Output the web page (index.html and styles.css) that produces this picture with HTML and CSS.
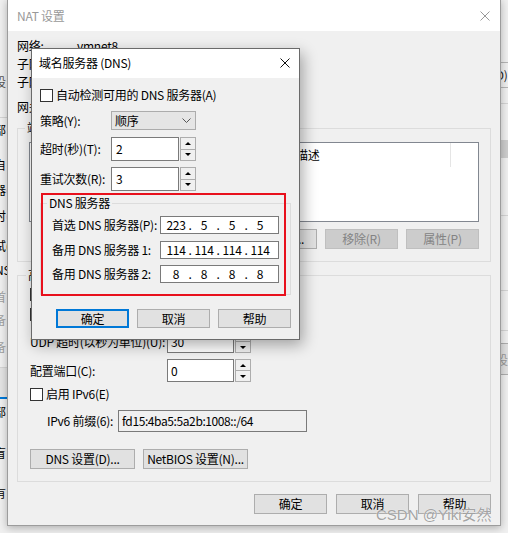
FILE: index.html
```html
<!DOCTYPE html>
<html lang="zh-CN">
<head>
<meta charset="utf-8">
<title>NAT 设置</title>
<link rel="stylesheet" href="styles.css">
</head>
<body>
<div class="desk">

  <div class="win back">
    <div class="bk-l">
      <div class="bk-t b1 gray">设</div>
      <div class="bk-line b2"></div>
      <div class="bk-t b3">部</div>
      <div class="bk-t b4">自</div>
      <div class="bk-t b5">器<span class="blue">(</span></div>
      <div class="bk-t b6">时<span class="blue">(</span></div>
      <div class="bk-t b7">试(</div>
      <div class="bk-t b8 sm">DNS</div>
      <div class="bk-t b9 lgray">首</div>
      <div class="bk-t b10 lgray">备</div>
      <div class="bk-t b11 lgray">备</div>
      <div class="bk-line b12"></div>
      <div class="bk-tab"></div>
      <div class="bk-t b14">部</div>
      <div class="bk-t b15">盲</div>
      <div class="bk-t b16">有</div>
    </div>
    <div class="bk-r">
      <div class="br-btn">(D)</div>
      <div class="bk-line r2"></div>
      <div class="br-band"></div>
      <div class="bk-line r4"></div>
      <div class="bk-line r5"></div>
      <div class="bk-line r6"></div>
      <div class="br-btn2">设</div>
    </div>
  </div>

  <div class="win nat">
    <div class="titlebar nat-tb">
      <span class="ttl">NAT 设置</span>
      <svg class="xicon" width="10" height="10" viewBox="0 0 10 10"><path d="M0.5 0.5L9.5 9.5M9.5 0.5L0.5 9.5"/></svg>
    </div>
    <div class="nat-body">
      <div class="irow"><span class="ilbl">网络:</span><span>vmnet8</span></div>
      <div class="irow"><span class="ilbl">子网 IP:</span></div>
      <div class="irow"><span class="ilbl">子网掩码:</span></div>
      <div class="irow gw"><span class="ilbl">网关 IP(G):</span></div>

      <fieldset class="grp pf">
        <legend>端口转发(F)</legend>
        <div class="lv">
          <div class="lv-head">
            <span class="c1"></span><span class="c2"></span><span class="c3"></span><span class="c4">描述</span>
          </div>
        </div>
        <div class="brow">
          <button class="btn b73">添加(A)...</button>
          <button class="btn b73 dis">移除(R)</button>
          <button class="btn b73 dis">属性(P)</button>
        </div>
      </fieldset>

      <fieldset class="grp adv">
        <legend>高级</legend>
        <div class="chk a1"><span class="box"></span></div>
        <div class="chk a2"><span class="box"></span></div>
        <div class="frow a3">
          <span class="flbl">UDP 超时(以秒为单位)(U):</span>
          <div class="spin nspin"><span class="sv">30</span><span class="sb"><span class="up"></span><span class="dn"></span></span></div>
        </div>
        <div class="frow a4">
          <span class="flbl">配置端口(C):</span>
          <div class="spin nspin"><span class="sv">0</span><span class="sb"><span class="up"></span><span class="dn"></span></span></div>
        </div>
        <div class="chk a5"><span class="box"></span><span>启用 IPv6(E)</span></div>
        <div class="frow a6">
          <span class="plbl">IPv6 前缀(6):</span>
          <span class="pbox">fd15:4ba5:5a2b:1008::/64</span>
        </div>
        <div class="brow2">
          <button class="btn b105">DNS 设置(D)...</button>
          <button class="btn b105">NetBIOS 设置(N)...</button>
        </div>
      </fieldset>

      <div class="foot">
        <button class="btn b73">确定</button>
        <button class="btn b73">取消</button>
        <button class="btn b73">帮助</button>
      </div>
    </div>
  </div>

  <div class="win dns">
    <div class="titlebar dns-tb">
      <span class="dttl">域名服务器 (DNS)</span>
      <svg class="xicon dark" width="10" height="10" viewBox="0 0 10 10"><path d="M0.5 0.5L9.5 9.5M9.5 0.5L0.5 9.5"/></svg>
    </div>
    <div class="dns-body">
      <div class="chk d1"><span class="box"></span><span>自动检测可用的 DNS 服务器(A)</span></div>
      <div class="drow d2">
        <span class="dlbl">策略(Y):</span>
        <span class="sel"><span>顺序</span><svg width="9" height="5" viewBox="0 0 9 5"><path d="M0.5 0.5L4.5 4.5L8.5 0.5"/></svg></span>
      </div>
      <div class="drow d3">
        <span class="dlbl">超时(秒)(T):</span>
        <div class="spin dspin"><span class="sv">2</span><span class="sb"><span class="up"></span><span class="dn"></span></span></div>
      </div>
      <div class="drow d4">
        <span class="dlbl">重试次数(R):</span>
        <div class="spin dspin"><span class="sv">3</span><span class="sb"><span class="up"></span><span class="dn"></span></span></div>
      </div>
      <fieldset class="grp dgrp">
        <legend>DNS 服务器</legend>
        <div class="iprow i1">
          <span class="iplbl">首选 DNS 服务器(P):</span>
          <span class="ip"><span class="oct">223</span><span class="dot">.</span><span class="oct">5</span><span class="dot">.</span><span class="oct">5</span><span class="dot">.</span><span class="oct">5</span></span>
        </div>
        <div class="iprow i2">
          <span class="iplbl">备用 DNS 服务器 1:</span>
          <span class="ip"><span class="oct">114</span><span class="dot">.</span><span class="oct">114</span><span class="dot">.</span><span class="oct">114</span><span class="dot">.</span><span class="oct">114</span></span>
        </div>
        <div class="iprow i3">
          <span class="iplbl">备用 DNS 服务器 2:</span>
          <span class="ip"><span class="oct">8</span><span class="dot">.</span><span class="oct">8</span><span class="dot">.</span><span class="oct">8</span><span class="dot">.</span><span class="oct">8</span></span>
        </div>
      </fieldset>
      <div class="dbtns">
        <button class="btn b73 def">确定</button>
        <button class="btn b73">取消</button>
        <button class="btn b73">帮助</button>
      </div>
    </div>
  </div>

  <div class="redbox"></div>
  <div class="watermark">CSDN @Yiki安然</div>
</div>
</body>
</html>
```

FILE: styles.css
```css
* { box-sizing: border-box; }
html, body { margin: 0; padding: 0; }
body {
  width: 508px; height: 533px; overflow: hidden;
  background: #f0f0f0;
  font-family: "Noto Sans CJK SC", "Microsoft YaHei", sans-serif;
  font-size: 12px; line-height: 16px; color: #000;
  letter-spacing: -0.25px;
}
.desk { position: relative; width: 508px; height: 533px; overflow: hidden; }

.win { position: absolute; background: #f0f0f0; }

/* ---------- background window ---------- */
.back { left: 0; top: 0; width: 508px; height: 533px; display: flex; justify-content: space-between; }
.bk-l { width: 40px; margin-left: -6px; display: flex; flex-direction: column; }
.bk-r { width: 8px; display: flex; flex-direction: column; }
.bk-t { height: 16px; white-space: nowrap; }
.bk-t.sm { margin-left: -7px; }
.gray { color: #555; }
.lgray { color: #a0a0a0; }
.blue { color: #1d6fd1; }
.bk-line { height: 1px; background: #d4d4d4; }
.b1 { margin-top: 74px; }
.b2 { margin-top: 27px; }
.b3 { margin-top: 4px; }
.b4 { margin-top: 19px; }
.b5 { margin-top: 9px; }
.b6 { margin-top: 10px; }
.b7 { margin-top: 14px; }
.b8 { margin-top: 8px; }
.b9 { margin-top: 11px; }
.b10 { margin-top: 7px; }
.b11 { margin-top: 11px; }
.b12 { margin-top: 12px; }
.bk-tab { height: 31px; background: #e4e4e4; border-bottom: 2px solid #0078d7; }
.b14 { margin-top: 5px; }
.b15 { margin-top: 25px; }
.b16 { margin-top: 24px; }
.br-btn { margin-top: 62px; height: 26px; border-top: 1px solid #b5b5b5; border-bottom: 1px solid #b5b5b5; padding-top: 4px; margin-left: -8px; white-space: nowrap; color: #222; }
.r2 { margin-top: 15px; }
.br-band { margin-top: 36px; height: 18px; background: #cdcdcd; }
.r4 { margin-top: 57px; }
.r5 { margin-top: 74px; }
.r6 { margin-top: 39px; }
.br-btn2 { margin-top: 12px; height: 32px; background: #e1e1e1; border-top: 1px solid #adadad; border-bottom: 1px solid #adadad; color: #9a9a9a; padding-top: 8px; margin-left: -4px; }

/* ---------- common ---------- */
.titlebar { background: #fff; display: flex; align-items: center; justify-content: space-between; flex: none; }
.xicon path { stroke: #999; stroke-width: 1; fill: none; }
.xicon.dark path { stroke: #111; }

.btn {
  font: inherit; letter-spacing: inherit; color: #000; margin: 0; padding: 0;
  background: #e1e1e1; border: 1px solid #adadad;
  height: 20px; line-height: 16px; white-space: nowrap;
}
.btn.dis { background: #cccccc; border-color: #bfbfbf; color: #838383; }
.btn.def { border: 2px solid #0078d7; }
.b73 { width: 73px; }
.b105 { width: 105px; }

.chk { display: flex; align-items: center; height: 16px; gap: 3px; white-space: nowrap; }
.box { width: 13px; height: 13px; background: #fff; border: 1px solid #333; flex: none; }

.grp { margin: 0; border: 1px solid #dcdcdc; min-width: 0; }
.grp legend { padding: 0 2px; height: 16px; line-height: 16px; }

.spin { display: flex; }
.sv { flex: 1; background: #fff; border: 1px solid #7a7a7a; display: flex; align-items: center; }
.sb { width: 16px; margin-left: 1px; display: flex; flex-direction: column; }
.sb span { flex: 1; background: #f0f0f0; border: 1px solid #adadad; display: flex; align-items: center; justify-content: center; }
.sb .dn { border-top: none; }
.sb .up::after { content: ""; border-left: 3px solid transparent; border-right: 3px solid transparent; border-bottom: 3px solid #000; }
.sb .dn::after { content: ""; border-left: 3px solid transparent; border-right: 3px solid transparent; border-top: 3px solid #000; }

/* ---------- NAT window ---------- */
.nat {
  left: 7px; top: -1px; width: 494px; height: 527px;
  border: 1px solid #9c9c9c;
  box-shadow: 0 2px 8px rgba(0,0,0,.28);
  display: flex; flex-direction: column;
}
.nat-tb { height: 31px; padding: 0 10px 0 9px; }
.ttl { color: #999; }
.nat-body { flex: 1; padding: 6px 9px 0 9px; display: flex; flex-direction: column; }
.irow { display: flex; height: 18px; align-items: center; white-space: nowrap; }
.ilbl { width: 60px; flex: none; }
.irow.gw { margin-top: 7px; }

.pf { margin-top: 4px; padding: 6px 11px 12px 11px; }
.pf legend, .adv legend { margin-left: -4px; }
.lv { height: 80px; background: #fff; border: 1px solid #828790; }
.lv-head { display: flex; height: 24px; align-items: center; white-space: nowrap; }
.lv-head span { padding-left: 6px; height: 24px; line-height: 24px; overflow: hidden; }
.c1 { width: 80px; } .c2 { width: 60px; } .c3 { width: 120px; }
.c4 { width: 161px; border-right: 1px solid #e5e5e5; }
.brow { margin-top: 7px; display: flex; justify-content: flex-end; gap: 8px; }

.adv { margin-top: 5px; padding: 3px 12px 12px 12px; display: flex; flex-direction: column; }
.a2 { margin-top: 4px; }
.frow { display: flex; align-items: center; white-space: nowrap; }
.a3 { margin-top: 8px; height: 23px; }
.a4 { margin-top: 6px; height: 23px; }
.a5 { margin-top: 4px; }
.a6 { margin-top: 8px; height: 22px; }
.flbl { width: 137px; flex: none; }
.nspin { width: 84px; height: 23px; }
.nspin .sv { padding-left: 3px; }
.plbl { width: 71px; margin-left: 17px; flex: none; }
.pbox { width: 189px; height: 22px; border: 1px solid #7a7a7a; background: #f0f0f0; padding-left: 3px; line-height: 20px; letter-spacing: -0.4px; }
.brow2 { margin-top: 17px; display: flex; gap: 8px; }
.foot { margin-top: 12px; display: flex; justify-content: flex-end; gap: 9px; }

/* ---------- DNS dialog ---------- */
.dns {
  left: 31px; top: 48px; width: 269px; height: 292px;
  border: 1px solid #6a6a6a;
  box-shadow: 3px 5px 14px rgba(0,0,0,.33);
  display: flex; flex-direction: column;
}
.dns-tb { height: 29px; padding: 0 9px 2px 7px; }
.dns-body { flex: 1; padding: 0 8px 0 8px; display: flex; flex-direction: column; }
.d1 { margin-top: 9px; }
.drow { display: flex; align-items: center; white-space: nowrap; }
.dlbl { width: 71px; flex: none; }
.d2 { margin-top: 8px; height: 19px; }
.d3 { margin-top: 7px; height: 24px; }
.d4 { margin-top: 6px; height: 24px; }
.sel {
  width: 85px; height: 19px; background: #e5e5e5; border: 1px solid #acacac;
  display: flex; align-items: center; justify-content: space-between; padding: 0 4px 0 3px;
}
.sel svg path { stroke: #555; fill: none; stroke-width: 1; }
.dspin { width: 85px; height: 24px; }
.dspin .sv { padding-left: 4px; }
.dgrp { margin-top: 4px; padding: 5px 10px 11px 11px; display: flex; flex-direction: column; }
.dgrp legend { margin-left: -5px; }
.iprow { display: flex; align-items: center; height: 18px; white-space: nowrap; }
.i2 { margin-top: 7px; }
.i3 { margin-top: 6px; }
.iplbl { width: 108px; flex: none; }
.ip { width: 119px; height: 18px; border: 1px solid #7a7a7a; background: #fff; display: flex; align-items: center; padding-left: 3px; }
.oct { width: 24px; text-align: center; }
.dot { width: 4px; text-align: center; display: flex; justify-content: center; }
.dbtns { margin-top: 14px; display: flex; justify-content: flex-end; gap: 8px; }
.dbtns .btn { height: 19px; line-height: 15px; }

/* ---------- overlays ---------- */
.redbox { position: absolute; left: 41px; top: 193px; width: 245px; height: 103px; border: 2px solid #e8101c; }
.watermark {
  position: absolute; left: 376px; top: 506px;
  font-family: "Liberation Sans", "Noto Sans CJK SC", sans-serif; font-size: 15px; line-height: 18px;
  letter-spacing: 0;
  color: rgba(140,140,140,.8); text-shadow: 0 0 1px #fff; white-space: nowrap;
}
```
